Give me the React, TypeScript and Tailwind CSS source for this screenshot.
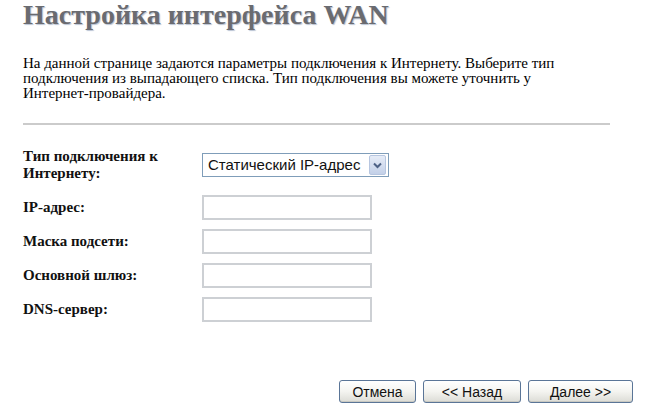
import React from "react";

function FormRow({label, children, className}: {label: React.ReactNode, children: React.ReactNode, className?: string}) {
    return (
        <div className={"flex items-center " + (className ?? "h-[34px]")}>
            <div className="w-[179px] text-[15px] leading-[17px] font-bold text-[#111]">
                {label}
            </div>
            {children}
        </div>
    );
}

function TextField() {
    return (
        <input
            type="text"
            className="w-[170px] h-[25px] bg-white border-2 border-[#cdd0d4] outline-none"/>
    );
}

function XpButton({children, width}: {children: React.ReactNode, width: string}) {
    return (
        <button
            className={width + " h-[23px] rounded-[3px] border border-[#5a7597] bg-gradient-to-b from-white via-[#f4f4f0] to-[#dcdcd6] text-[14px] text-[#111] leading-none shadow-[inset_0_-1px_0_#c9c9c2]"}
            style={{fontFamily: '"Liberation Sans", Arial, sans-serif'}}>
            {children}
        </button>
    );
}

export default function App() {
    return (
        <div className="w-[660px] h-[413px] bg-white pl-[23px] overflow-hidden"
             style={{fontFamily: '"Liberation Serif", "Times New Roman", serif'}}>

            <h1 className="pt-[1px] text-[28px] leading-[28px] font-bold text-[#6a6b70] [text-shadow:1px_1px_1px_#b9c3d3]">
                Настройка интерфейса WAN
            </h1>

            <p className="mt-[27px] text-[15px] leading-[15px] text-black">
                На данной странице задаются параметры подключения к Интернету. Выберите тип<br/>
                подключения из выпадающего списка. Тип подключения вы можете уточнить у<br/>
                Интернет-провайдера.
            </p>

            <div className="mt-[22px] w-[587px] border-t-2 border-[#cbcbcb]"/>

            <div className="mt-[22px] flex flex-col">
                <FormRow className="h-[36px]" label={<>Тип подключения к<br/>Интернету:</>}>
                    <div className="w-[187px] h-[24px] flex items-center border border-[#7f9db9] bg-white pl-[5px] pr-[2px]"
                         style={{fontFamily: '"Liberation Sans", Arial, sans-serif'}}>
                        <span className="flex-1 text-[15px] text-[#111] whitespace-nowrap">Статический IP-адрес</span>
                        <div className="w-[17px] h-[20px] flex items-center justify-center rounded-[2px] border border-[#b7c6e0] bg-gradient-to-b from-[#e6ecf7] to-[#c3d0e8]">
                            <svg width="9" height="7" viewBox="0 0 9 7">
                                <path d="M1 1.5 L4.5 5 L8 1.5" stroke="#4d6185" strokeWidth="2" fill="none"/>
                            </svg>
                        </div>
                    </div>
                </FormRow>
                <div className="mt-[7px] flex flex-col">
                    <FormRow label="IP-адрес:"><TextField/></FormRow>
                    <FormRow label="Маска подсети:"><TextField/></FormRow>
                    <FormRow label="Основной шлюз:"><TextField/></FormRow>
                    <FormRow label="DNS-сервер:"><TextField/></FormRow>
                </div>
            </div>

            <div className="mt-[54px] w-[610px] flex justify-end gap-[7px]">
                <XpButton width="w-[77px]">Отмена</XpButton>
                <XpButton width="w-[98px]">&lt;&lt; Назад</XpButton>
                <XpButton width="w-[105px]">Далее &gt;&gt;</XpButton>
            </div>
        </div>
    );
}
